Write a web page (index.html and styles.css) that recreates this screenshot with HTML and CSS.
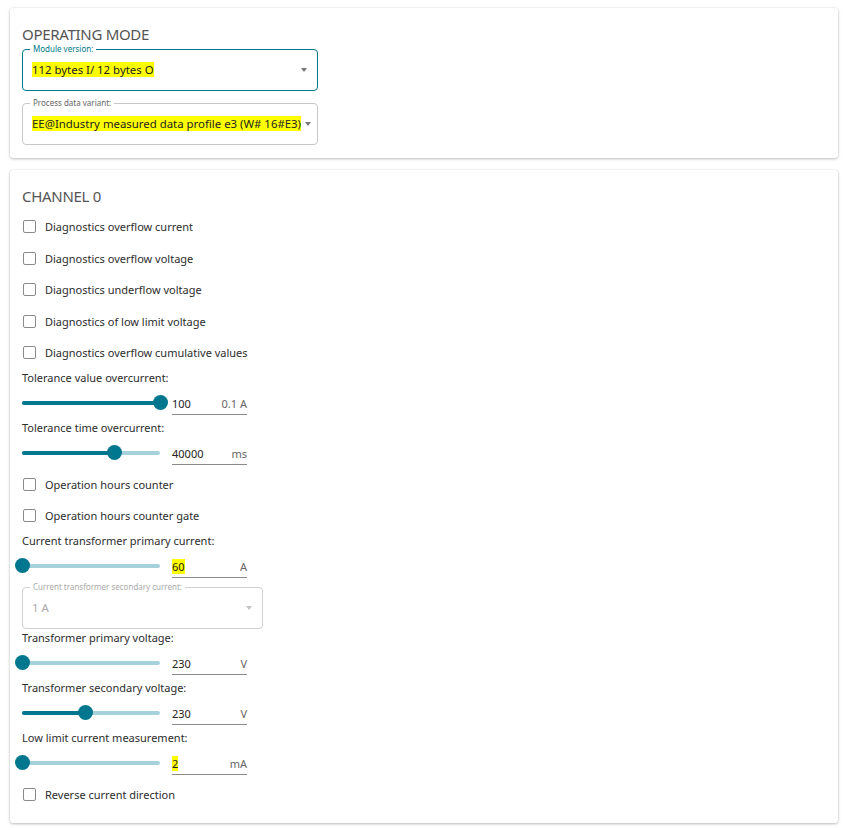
FILE: index.html
```html
<!DOCTYPE html>
<html>
<head>
<meta charset="utf-8">
<link rel="stylesheet" href="styles.css">
</head>
<body>
<div class="page">
  <section class="card card-mode">
    <h2 class="card-title">OPERATING MODE</h2>
    <div class="outlined focused w-296">
      <span class="float-label">Module version:</span>
      <span class="select-value"><mark>112 bytes I/ 12 bytes O</mark></span>
      <span class="caret"></span>
    </div>
    <div class="outlined w-296">
      <span class="float-label">Process data variant:</span>
      <span class="select-value"><mark>EE@Industry measured data profile e3 (W# 16#E3)</mark></span>
      <span class="caret"></span>
    </div>
  </section>

  <section class="card card-channel">
    <h2 class="card-title">CHANNEL 0</h2>
    <label class="check-row"><span class="box"></span>Diagnostics overflow current</label>
    <label class="check-row"><span class="box"></span>Diagnostics overflow voltage</label>
    <label class="check-row"><span class="box"></span>Diagnostics underflow voltage</label>
    <label class="check-row"><span class="box"></span>Diagnostics of low limit voltage</label>
    <label class="check-row"><span class="box"></span>Diagnostics overflow cumulative values</label>

    <div class="field-label">Tolerance value overcurrent:</div>
    <div class="slider-row">
      <div class="slider" style="--p:100%"><span class="track"></span><span class="fill"></span><span class="thumb"></span></div>
      <div class="num-input"><span class="num">100</span><span class="unit">0.1 A</span></div>
    </div>

    <div class="field-label">Tolerance time overcurrent:</div>
    <div class="slider-row">
      <div class="slider" style="--p:66.7%"><span class="track"></span><span class="fill"></span><span class="thumb"></span></div>
      <div class="num-input"><span class="num">40000</span><span class="unit">ms</span></div>
    </div>

    <label class="check-row"><span class="box"></span>Operation hours counter</label>
    <label class="check-row"><span class="box"></span>Operation hours counter gate</label>

    <div class="field-label">Current transformer primary current:</div>
    <div class="slider-row">
      <div class="slider" style="--p:0%"><span class="track"></span><span class="fill"></span><span class="thumb"></span></div>
      <div class="num-input"><span class="num"><mark>60</mark></span><span class="unit">A</span></div>
    </div>

    <div class="outlined disabled w-241">
      <span class="float-label">Current transformer secondary current:</span>
      <span class="select-value">1 A</span>
      <span class="caret"></span>
    </div>

    <div class="field-label">Transformer primary voltage:</div>
    <div class="slider-row">
      <div class="slider" style="--p:0%"><span class="track"></span><span class="fill"></span><span class="thumb"></span></div>
      <div class="num-input"><span class="num">230</span><span class="unit">V</span></div>
    </div>

    <div class="field-label">Transformer secondary voltage:</div>
    <div class="slider-row">
      <div class="slider" style="--p:45.7%"><span class="track"></span><span class="fill"></span><span class="thumb"></span></div>
      <div class="num-input"><span class="num">230</span><span class="unit">V</span></div>
    </div>

    <div class="field-label">Low limit current measurement:</div>
    <div class="slider-row">
      <div class="slider" style="--p:0%"><span class="track"></span><span class="fill"></span><span class="thumb"></span></div>
      <div class="num-input"><span class="num"><mark>2</mark></span><span class="unit">mA</span></div>
    </div>

    <label class="check-row"><span class="box"></span>Reverse current direction</label>
  </section>
</div>
</body>
</html>
```
FILE: styles.css
```css
* { box-sizing: border-box; }
html, body {
  margin: 0;
  padding: 0;
  background: #ffffff;
}
body {
  font-family: "Noto Sans", "Liberation Sans", Arial, sans-serif;
  font-size: 11px;
  color: #2d2d2d;
}
.page {
  display: flex;
  flex-direction: column;
  gap: 12px;
  padding: 8px 14px 8px 10px;
}
.card {
  background: #fff;
  border-radius: 3px;
  box-shadow: 0 1px 3px rgba(0,0,0,0.25), 0 0 2px rgba(0,0,0,0.08);
  padding: 16px 12px 13px 12px;
  display: flex;
  flex-direction: column;
  align-items: flex-start;
}
.card-channel { padding-bottom: 13px; }
.card-title {
  margin: 0 0 5px 0;
  font-size: 15px;
  line-height: 20px;
  font-weight: normal;
  color: #555;
  letter-spacing: -0.3px;
}
.outlined {
  position: relative;
  height: 42px;
  border: 1px solid #c8c8c8;
  border-radius: 4px;
  display: flex;
  align-items: center;
  padding: 0 10px 0 9px;
  flex: none;
}
.card-mode .outlined + .outlined { margin-top: 12px; }
.w-296 { width: 296px; }
.w-241 { width: 241px; margin-top: 5px; }
.outlined.focused { border-color: #00778a; }
.float-label {
  position: absolute;
  top: -7px;
  left: 7px;
  padding: 0 3px;
  background: #fff;
  font-size: 8px;
  line-height: 12px;
  color: #666;
  white-space: nowrap;
}
.outlined.focused .float-label { color: #00778a; }
.select-value {
  flex: 1;
  font-size: 11.4px;
  line-height: 14px;
  white-space: nowrap;
  color: #222;
}
mark {
  background: #ffff00;
  color: #222;
}
.caret {
  width: 0;
  height: 0;
  border-left: 3.5px solid transparent;
  border-right: 3.5px solid transparent;
  border-top: 4px solid #777;
  margin-left: 4px;
}
.outlined.disabled { border-color: #d0d0d0; }
.outlined.disabled .float-label,
.outlined.disabled .select-value { color: #aaa; }
.outlined.disabled .caret { border-top-color: #c4c4c4; }

.check-row {
  height: 31.5px;
  display: flex;
  align-items: center;
  gap: 9px;
  padding-left: 1px;
}
.box {
  width: 13px;
  height: 13px;
  border: 1.5px solid #8a8a8a;
  border-radius: 2px;
  flex: none;
}
.field-label {
  height: 18px;
  line-height: 17px;
}
.slider-row {
  height: 32px;
  display: flex;
  align-items: center;
  gap: 12px;
}
.slider {
  position: relative;
  width: 138px;
  height: 16px;
}
.track, .fill {
  position: absolute;
  left: 0;
  top: 6px;
  height: 4px;
  border-radius: 2px;
}
.track { width: 100%; background: #a5d2da; }
.fill { width: var(--p); background: #00778f; }
.thumb {
  position: absolute;
  top: 0;
  left: calc(var(--p) - 7.5px);
  width: 15px;
  height: 15px;
  border-radius: 50%;
  background: #00778f;
}
.num-input {
  width: 75px;
  height: 24px;
  padding-top: 5px;
  border-bottom: 1px solid #8a8a8a;
  display: flex;
  align-items: flex-start;
  justify-content: space-between;
  font-size: 11px;
  line-height: 15px;
}
.num { color: #222; }
.unit { color: #666; }
```
